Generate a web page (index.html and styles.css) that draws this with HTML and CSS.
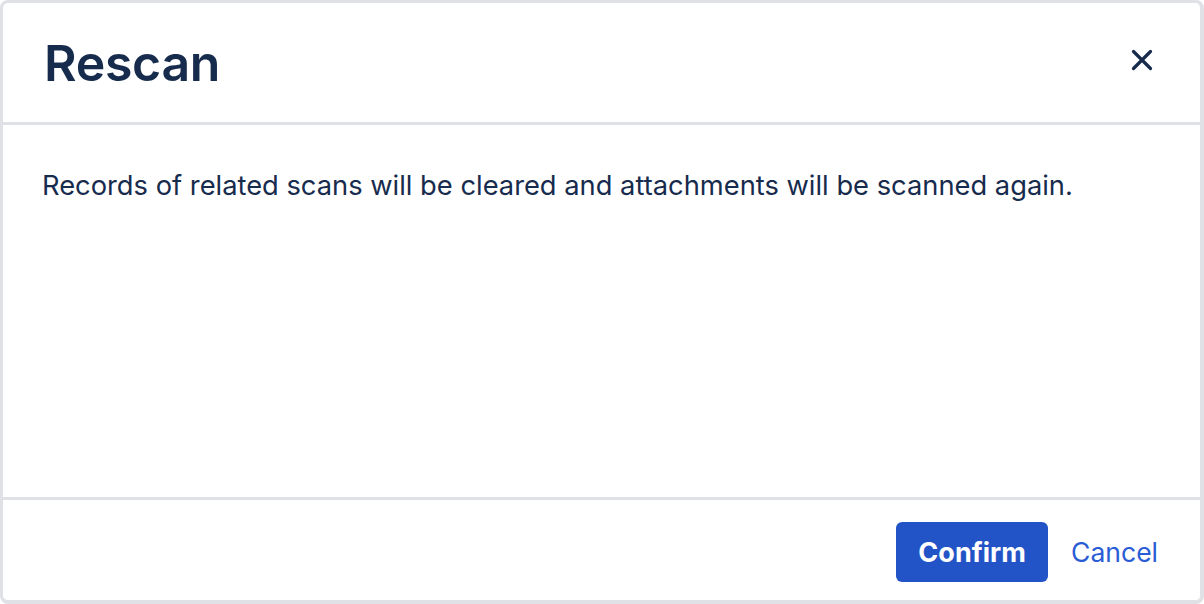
FILE: index.html
```html
<!DOCTYPE html>
<html>
<head>
<meta charset="utf-8">
<link rel="stylesheet" href="styles.css">
</head>
<body>
<div class="dialog">
  <div class="header">
    <h1 class="title">Rescan</h1>
    <button class="close" aria-label="Close">
      <svg width="22" height="22" viewBox="0 0 22 22"><path d="M2.5 2.5 L19.5 19.5 M19.5 2.5 L2.5 19.5" stroke="#172b4d" stroke-width="3.2" stroke-linecap="round"/></svg>
    </button>
  </div>
  <div class="content">
    <p class="text">Records of related scans will be cleared and attachments will be scanned again.</p>
  </div>
  <div class="footer">
    <button class="btn-primary">Confirm</button>
    <button class="btn-link">Cancel</button>
  </div>
</div>
</body>
</html>
```
FILE: styles.css
```css
html, body {
  margin: 0;
  padding: 0;
  background: #ffffff;
}
body {
  font-family: Inter, "Noto Sans", sans-serif;
  color: #172b4d;
}
.dialog {
  box-sizing: border-box;
  width: 1204px;
  height: 604px;
  border: 3px solid #dfe1e6;
  border-right-width: 4px;
  border-bottom-width: 4px;
  border-radius: 8px;
  display: flex;
  flex-direction: column;
  background: #fff;
}
.header {
  height: 119px;
  display: flex;
  align-items: center;
  justify-content: space-between;
  padding: 0 47px 0 41px;
  border-bottom: 3px solid #dfe1e6;
}
.title {
  margin: 0;
  font-size: 50px;
  font-weight: 600;
  letter-spacing: -0.3px;
  color: #172b4d;
}
.close {
  background: none;
  border: 0;
  padding: 0;
  width: 22px;
  height: 22px;
  display: flex;
  margin-bottom: 6px;
}
.content {
  flex: 1;
  padding: 0 39px;
  border-bottom: 3px solid #dfe1e6;
}
.text {
  margin: 44px 0 0;
  font-size: 27.3px;
  line-height: 34px;
}
.footer {
  height: 100px;
  box-sizing: border-box;
  display: flex;
  align-items: center;
  justify-content: flex-end;
  padding: 4px 42px 0 0;
  gap: 23px;
}
.btn-primary {
  font-family: Inter, "Noto Sans", sans-serif;
  background: #2354c7;
  color: #fff;
  border: 0;
  border-radius: 6px;
  width: 152px;
  height: 60px;
  font-size: 27px;
  font-weight: 700;
}
.btn-link {
  font-family: Inter, "Noto Sans", sans-serif;
  background: none;
  border: 0;
  padding: 0;
  color: #2a5cd6;
  font-size: 26.5px;
  font-weight: 400;
}
```
